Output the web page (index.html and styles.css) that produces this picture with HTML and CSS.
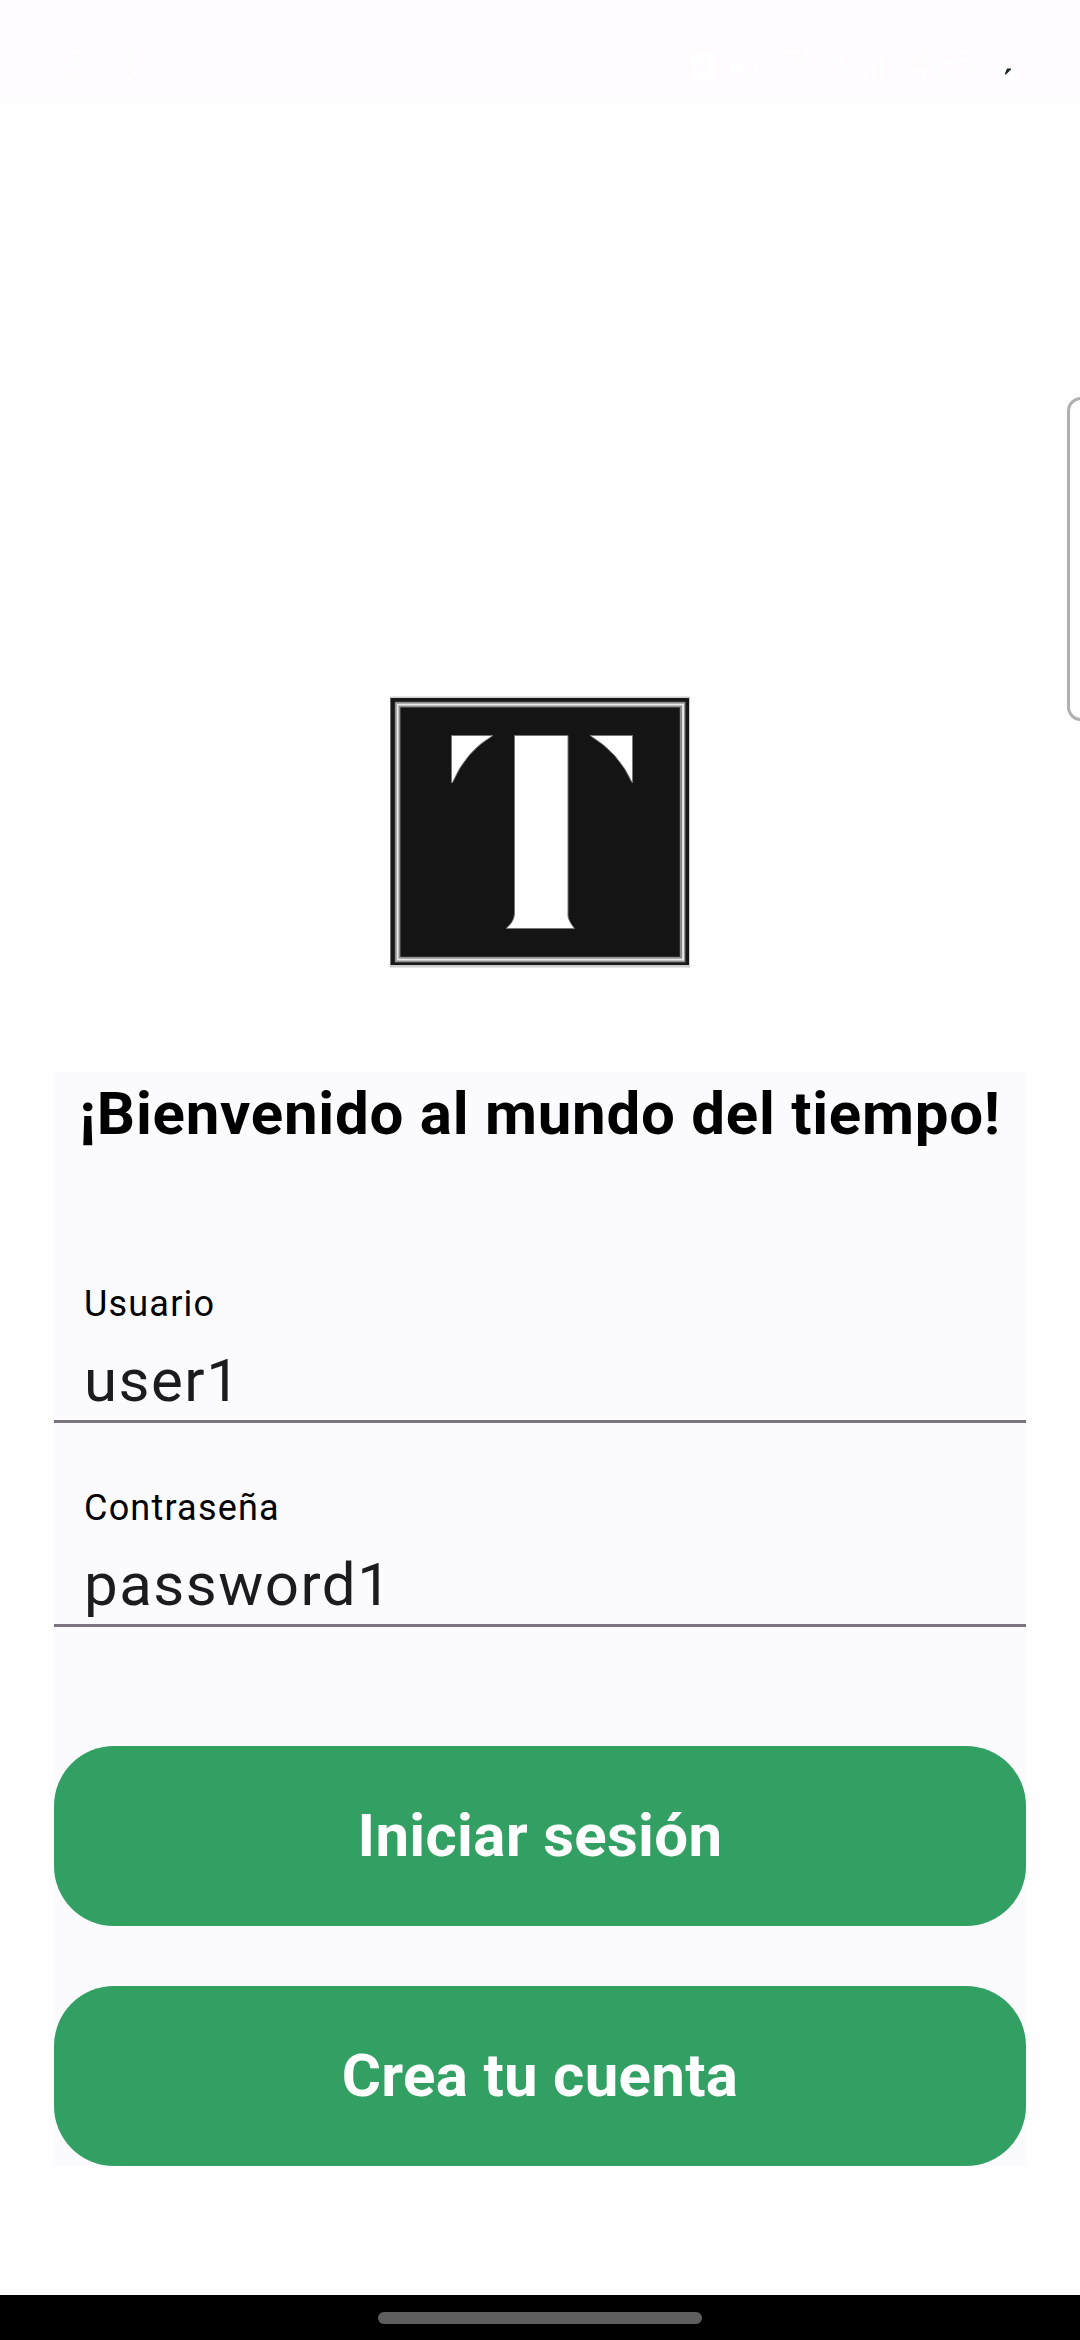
FILE: index.html
```html
<!DOCTYPE html>
<html lang="es">
<head>
<meta charset="utf-8">
<title>Iniciar sesión</title>
<link rel="stylesheet" href="styles.css">
</head>
<body>
<div class="screen">
  <header class="status">
    <span class="clock">8:13</span>
    <div class="tray">
      <svg class="ic-saver" viewBox="0 0 22 31"><path fill="#fff" fill-rule="evenodd" d="M7 1h8v3h5q2 0 2 2v23q0 2-2 2H2q-2 0-2-2V6q0-2 2-2h5zM4 23l2-2q10 2 12-10Q5 11 4 20z"/></svg>
      <svg class="ic-mute" viewBox="0 0 29 29"><path fill="#fff" d="M0 10h5l14 14v5l-9-8H0zM11 6l8-6v14zM2 1l18 18-1 2L1 3z"/><path fill="none" stroke="#fff" stroke-width="2.5" d="M28 2l-4 4 4 4-4 5 4 5-4 4 4 4"/></svg>
      <svg class="ic-wifi" viewBox="0 0 35 26"><path fill="none" stroke="#fff" stroke-width="3" d="M1 7q12-10 22-4M5 13q10-9 20 0M10 18q5-5 10 0M33 1q-7 4-6 8a3 3 0 1 0 3-4"/><circle cx="15" cy="23" r="2" fill="#fff"/></svg>
      <span class="volte"><span>Vo</span><span>LTE</span></span>
      <svg class="ic-signal" viewBox="0 0 20 22"><path fill="#fff" d="M0 16h4v6H0zM8 8h4v14H8zM16 0h4v22h-4z"/></svg>
      <span class="percent">46%</span>
      <svg class="ic-battery" viewBox="0 0 20 30"><path fill="#fff" d="M0 17h20v10q0 3-3 3H3q-3 0-3-3z"/><path fill="#222" d="M9 18.500h4v1l-5 5h-1v-1z"/></svg>
    </div>
  </header>

  <main class="page">
    <svg class="logo" viewBox="0 0 302 272" role="img" aria-label="T">
      <rect x="1" y=".5" width="300" height="271" fill="#cfcdce"/>
      <rect x="1.5" y="2" width="298.500" height="267" fill="#171717"/>
      <rect x="8.6" y="8.6" width="285" height="255" fill="#141414" stroke="#8b8b8b" stroke-width="5.6"/>
      <rect x="8.6" y="8.6" width="285.500" height="255" fill="none" stroke="#e8e8e8" stroke-width="2"/>
      <g fill="#fff" stroke="#777" stroke-width="1">
        <path d="M62.5 39.5H104Q77 55 63.500 86.500H62.500zM201 39.500H243.500V86.500H243Q230 57 201 39.500z"/>
        <path d="M125.500 39.500H179V220Q179.500 225 185.500 232.500H117Q125 226 125.500 218z"/>
      </g>
    </svg>

    <form class="card">
      <h1 class="title">¡Bienvenido al mundo del tiempo!</h1>
      <div class="fields">
        <div class="field">
          <span class="label">Usuario</span>
          <span class="value">user1</span>
        </div>
        <div class="field">
          <span class="label">Contraseña</span>
          <span class="value">password1</span>
        </div>
      </div>
      <div class="actions">
        <button class="btn" type="button">Iniciar sesión</button>
        <button class="btn" type="button">Crea tu cuenta</button>
      </div>
    </form>
  </main>

  <footer class="navbar"><span class="handle"></span></footer>
  <div class="edge-panel"></div>
</div>
</body>
</html>
```

FILE: styles.css
```css
* { box-sizing: border-box; }

body {
  margin: 0;
  font-family: Roboto, sans-serif;
  background: #fefefe;
}

.screen {
  position: relative;
  display: flex;
  flex-direction: column;
  width: 1080px;
  height: 2340px;
  overflow: hidden;
}

.status {
  display: flex;
  flex: none;
  justify-content: space-between;
  height: 99px;
  padding: 41px 62px 0 62px;
  background: #fffbff;
  color: #fff;
}

.clock,
.percent {
  font-size: 41px;
  line-height: 48px;
}

.clock { letter-spacing: -0.5px; }
.percent { width: 83px; letter-spacing: 1px; white-space: nowrap; }

.tray {
  display: flex;
  align-items: flex-start;
}

.tray svg { flex: none; }

.ic-saver { width: 22px; height: 31px; margin: 9px 18px 0 0; }
.ic-mute { width: 29px; height: 29px; margin: 10px 16px 0 0; }
.ic-wifi { width: 35px; height: 26px; margin: 9px 16px 0 0; }
.ic-signal { width: 20px; height: 22px; margin: 16px 24px 0 0; }
.ic-battery { width: 20px; height: 30px; margin: 9px 0 0 7px; }

.volte {
  display: flex;
  flex-direction: column;
  width: 25px;
  margin: 11px 12px 0 0;
  font-size: 14px;
  font-weight: 700;
  line-height: 13px;
}

.page {
  display: flex;
  flex: 1;
  flex-direction: column;
  align-items: center;
  padding: 597px 54px 0;
}

.logo {
  flex: none;
  width: 302px;
  height: 272px;
}

.card {
  display: flex;
  flex: none;
  flex-direction: column;
  width: 972px;
  height: 1094px;
  margin-top: 104px;
  background: #fbfbfd;
}

.title {
  margin: 6px 0 0;
  font-size: 60px;
  font-weight: 700;
  line-height: 72px;
  letter-spacing: 0.75px;
  text-align: center;
  white-space: nowrap;
  color: #000;
}

.fields {
  display: flex;
  flex-direction: column;
  gap: 36px;
  margin-top: 105px;
}

.field {
  display: flex;
  flex-direction: column;
  height: 168px;
  padding: 25px 30px 0;
  border-bottom: 3px solid #79747e;
}

.label {
  font-size: 36px;
  line-height: 48px;
  letter-spacing: 1.2px;
  color: #000;
}

.value {
  margin-top: 17px;
  font-size: 60px;
  line-height: 72px;
  letter-spacing: 1.5px;
  color: #1c1b1f;
}

.actions {
  display: flex;
  flex-direction: column;
  gap: 60px;
  margin-top: auto;
}

.btn {
  height: 180px;
  padding: 0;
  border: 0;
  border-radius: 60px;
  background: #33a063;
  color: #fff;
  font: 700 60px/72px Roboto, sans-serif;
  letter-spacing: 0.3px;
}

.navbar {
  display: flex;
  flex: none;
  justify-content: center;
  height: 45px;
  padding-top: 17px;
  background: #000;
}

.handle {
  width: 324px;
  height: 12px;
  border-radius: 6px;
  background: #5e5e5e;
}

/* Drawer handle that overlaps the right screen edge */
.edge-panel {
  position: absolute;
  top: 397px;
  right: -20px;
  width: 33px;
  height: 324px;
  border: 3px solid #b0b0b0;
  border-radius: 14px;
}
```
